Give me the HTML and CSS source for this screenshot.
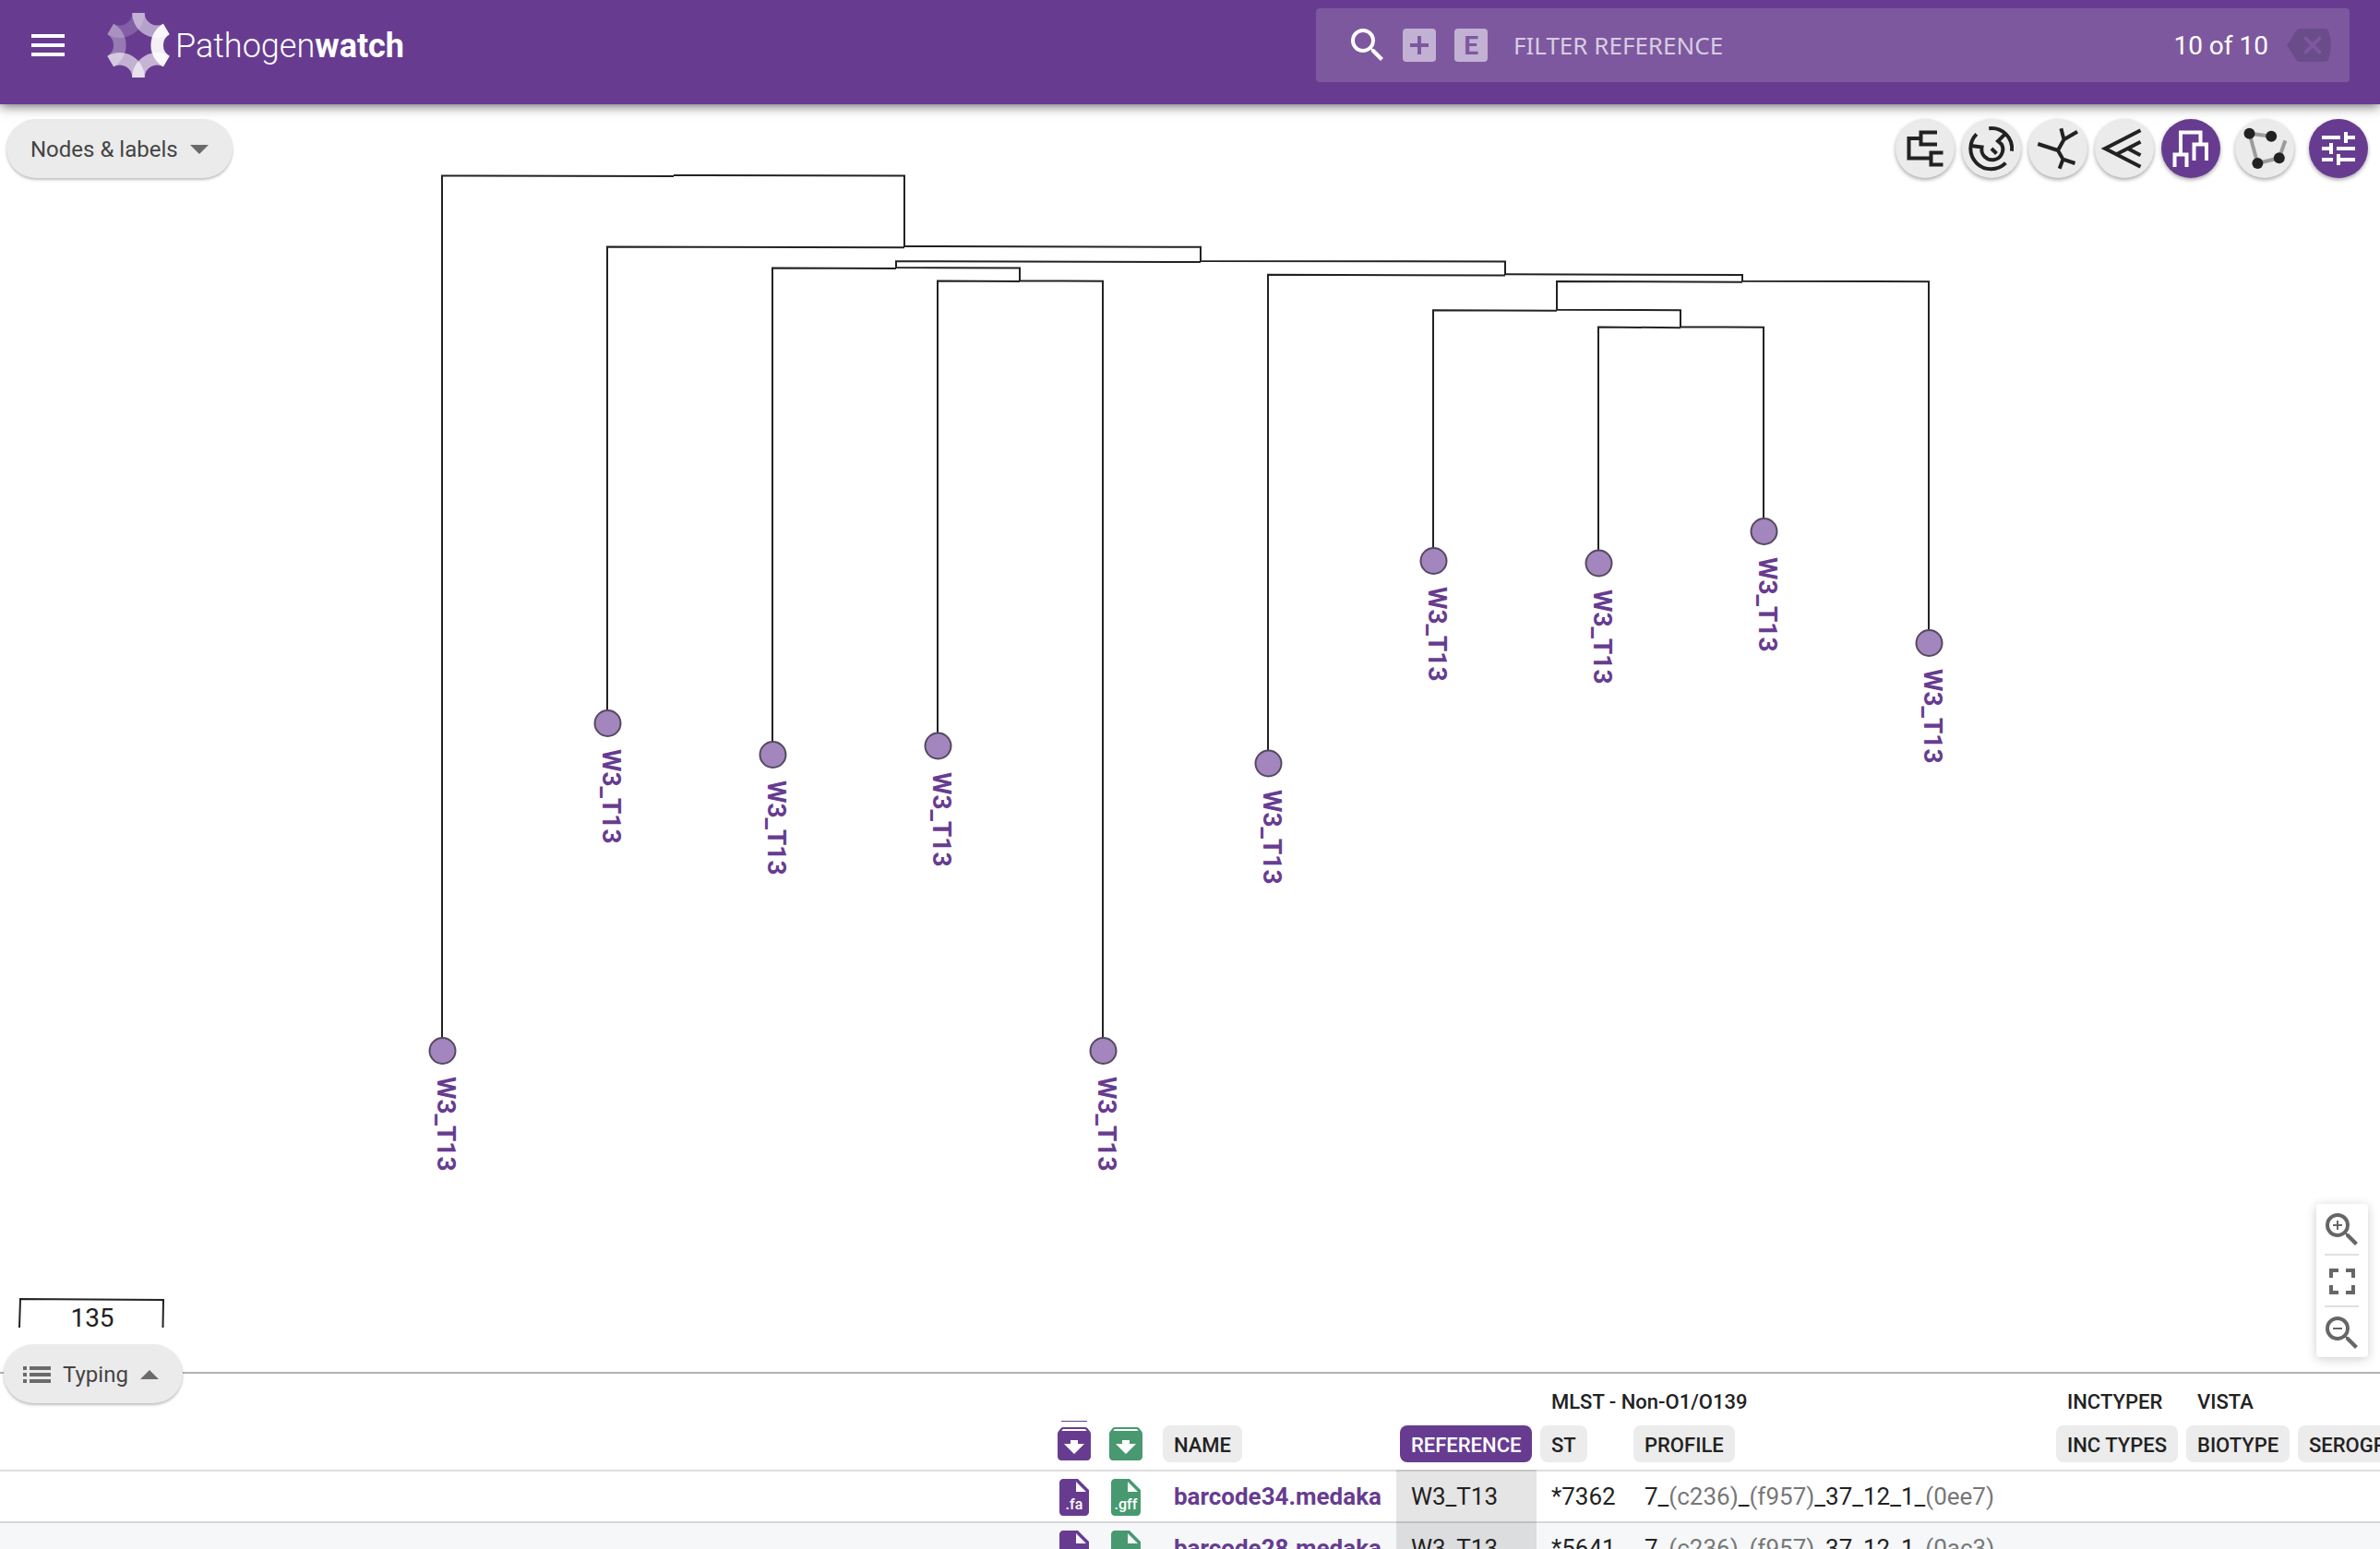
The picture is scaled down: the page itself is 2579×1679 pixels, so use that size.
FILE: index.html
```html
<!DOCTYPE html>
<html lang="en">
<head>
<meta charset="utf-8">
<title>Pathogenwatch</title>
<link rel="stylesheet" href="styles.css">
</head>
<body>
<header class="topbar">
  <button class="menu-button" type="button" aria-label="Menu">
    <svg class="icon" viewBox="0 0 24 24"><path d="M3 18h18v-2H3v2zm0-5h18v-2H3v2zm0-7v2h18V6H3z"/></svg>
  </button>
  <a class="brand" href="#">
    <svg class="brand-mark" viewBox="-36 -36 72 72" aria-hidden="true">
      <defs><path id="arc" d="M30.3 -17.5A20.2 20.2 0 0 0 30.3 17.5" fill="none" stroke="#fff" stroke-width="13.5"/></defs>
      <use href="#arc" opacity=".92"/>
      <use href="#arc" transform="rotate(60)" opacity=".62"/>
      <use href="#arc" transform="rotate(120)" opacity=".6"/>
      <use href="#arc" transform="rotate(180)" opacity=".32"/>
      <use href="#arc" transform="rotate(240)" opacity=".18"/>
      <use href="#arc" transform="rotate(300)" opacity=".52"/>
    </svg>
    <span class="brand-name">Pathogen<b>watch</b></span>
  </a>
  <form class="filter" role="search">
    <button class="filter-button" type="button" aria-label="Search">
      <svg class="icon" viewBox="0 0 24 24"><path d="M15.5 14h-.79l-.28-.27A6.471 6.471 0 0 0 16 9.5 6.5 6.5 0 1 0 9.5 16c1.61 0 3.09-.59 4.23-1.57l.27.28v.79l5 4.99L20.49 19l-4.99-5zm-6 0C7.01 14 5 11.99 5 9.5S7.01 5 9.5 5 14 7.01 14 9.5 11.99 14 9.5 14z"/></svg>
    </button>
    <button class="filter-key" type="button" aria-label="Add">
      <svg class="key-plus" viewBox="0 0 20 20"><path d="M8 0h4v8h8v4h-8v8H8v-8H0V8h8z"/></svg>
    </button>
    <button class="filter-key" type="button">E</button>
    <input class="filter-input" type="text" placeholder="FILTER REFERENCE" aria-label="Filter reference">
    <span class="filter-count">10 of 10</span>
    <button class="filter-clear" type="button" aria-label="Clear filter">
      <svg class="clear-icon" viewBox="0 0 48 36"><path fill-rule="evenodd" d="M14 0H42Q44 0 45 2Q48 10 48 18T45 34Q44 36 42 36H14Q12 36 10.500 34L0 18L10.500 2Q12 0 14 0ZM20.800 8L18 10.800L25.200 18L18 25.200L20.800 28L28 20.800L35.200 28L38 25.200L30.800 18L38 10.800L35.200 8L28 15.200Z"/></svg>
    </button>
  </form>
</header>

<main class="tree-panel">
  <svg class="tree" viewBox="0 0 2579 1374" role="img" aria-label="Phylogenetic tree">
    <g class="branches">
      <path d="M479 1026V77.500L730 78M730 77L980 77.500V155M658 671V154.500L980 155.200M980 154L1301 154.700V170.500M971 178V170.200L1301 171M1301 170L1631 170.500V185M837 704V177.500L971 178M971 177L1105 177.500V192M1016 695V191.500L1105 192M1105 191.200L1195 191.700V1026"/>
      <path d="M1374 714V184.800L1631 185.500M1631 184.200L1888 185V192.500M1687 223V192L1888 192.700M1888 191.700L2090 192.200V584M1553 495V223.200L1687 223.700M1687 222.700L1821 223.200V242M1732 497V241.500L1821 242.200M1821 241.200L1911 241.700V463"/>
    </g>
    <g class="nodes">
      <circle cx="479.500" cy="1026" r="14"/><circle cx="658.500" cy="671" r="14"/><circle cx="837.500" cy="705" r="14"/><circle cx="1016.500" cy="695.500" r="14"/><circle cx="1195.500" cy="1026" r="14"/><circle cx="1374.500" cy="714.500" r="14"/><circle cx="1553.500" cy="495" r="14"/><circle cx="1732.500" cy="497.500" r="14"/><circle cx="1911.500" cy="463" r="14"/><circle cx="2090.500" cy="584" r="14"/>
    </g>
    <g class="labels">
      <text transform="translate(474 1054) rotate(90)">W3_T13</text>
      <text transform="translate(653 699) rotate(90)">W3_T13</text>
      <text transform="translate(832 733) rotate(90)">W3_T13</text>
      <text transform="translate(1011 724) rotate(90)">W3_T13</text>
      <text transform="translate(1190 1054) rotate(90)">W3_T13</text>
      <text transform="translate(1369 743) rotate(90)">W3_T13</text>
      <text transform="translate(1548 523) rotate(90)">W3_T13</text>
      <text transform="translate(1727 526) rotate(90)">W3_T13</text>
      <text transform="translate(1906 491) rotate(90)">W3_T13</text>
      <text transform="translate(2085 612) rotate(90)">W3_T13</text>
    </g>
    <g class="scale-bar">
      <path d="M21 1326L22 1295L177 1296L176.500 1326"/>
      <text x="100" y="1325">135</text>
    </g>
  </svg>

  <div class="tree-controls">
    <button class="pill" type="button">Nodes &amp; labels
      <svg class="caret" viewBox="0 0 20 10"><path d="M0 0h20L10 10z"/></svg>
    </button>
    <div class="tree-tools">
      <button class="round" type="button" aria-label="Rectangular"><svg viewBox="0 0 64 64"><path d="M45 14.500H27.500V27.500H45M27.500 21H14.500V42.500H38M51.500 36.500H38.500V49.500H51.500"/></svg></button>
      <button class="round" type="button" aria-label="Circular"><svg viewBox="0 0 64 64"><path d="M15.800 16.300A22 22 0 1 0 47.400 47.700M29.200 10.200A22 22 0 0 1 54 34.700M10 29L21.500 30.500A11.500 11.500 0 1 0 43 27.500L39 24L47.400 15.700M32 32L37.500 37.500"/></svg></button>
      <button class="round" type="button" aria-label="Radial"><svg viewBox="0 0 64 64"><path d="M10.300 27L32 34L38.500 22.300L53 13.700M38.500 22.300L35.400 10.300M32 34L37.500 43.700L50.500 48M37.500 43.700L33.700 53.700"/></svg></button>
      <button class="round" type="button" aria-label="Diagonal"><svg viewBox="0 0 64 64"><path d="M49.500 12.300L11 32L49.500 51.700M23.400 38.300L49.500 24.700M35.800 32L49.500 39.300"/></svg></button>
      <button class="round active" type="button" aria-label="Hierarchical"><svg viewBox="0 0 64 64"><path d="M21 38V14.500H42.500V27M14.500 52V38.500H27.500V52M35.500 45V27.500H49V45"/></svg></button>
      <button class="round spaced" type="button" aria-label="Lasso"><svg viewBox="0 0 64 64"><path class="faint" d="M39.200 18.700L15.500 15.700L24.400 48L47.800 42.300L54.300 23.300"/><g class="dots"><circle cx="15.500" cy="15.700" r="6"/><circle cx="39.200" cy="18.700" r="6"/><circle cx="24.400" cy="48" r="6"/><circle cx="47.800" cy="42.300" r="6"/></g></svg></button>
      <button class="round active spaced" type="button" aria-label="Settings"><svg class="solid" viewBox="-4 -4 32 32"><path d="M3 17v2h6v-2H3zM3 5v2h10V5H3zm10 16v-2h8v-2h-8v-2h-2v6h2zM7 9v2H3v2h4v2h2V9H7zm14 4v-2H11v2h10zm-6-4h2V7h4V5h-4V3h-2v6z"/></svg></button>
    </div>
  </div>

  <div class="zoom-controls">
    <button type="button" aria-label="Zoom in"><svg class="icon" viewBox="0 0 24 24"><path d="M15.500 14h-.79l-.28-.27A6.471 6.471 0 0 0 16 9.500 6.500 6.500 0 1 0 9.500 16c1.610 0 3.090-.59 4.230-1.570l.27.280v.79l5 4.990L20.490 19l-4.990-5zm-6 0C7.010 14 5 11.990 5 9.500S7.010 5 9.500 5 14 7.010 14 9.500 11.990 14 9.500 14zM12 10h-2v2H9v-2H7V9h2V7h1v2h2v1z"/></svg></button>
    <button type="button" aria-label="Fit to view"><svg class="icon" viewBox="0 0 24 24"><path d="M7 14H5v5h5v-2H7v-3zm-2-4h2V7h3V5H5v5zm12 7h-3v2h5v-5h-2v3zM14 5v2h3v3h2V5h-5z"/></svg></button>
    <button type="button" aria-label="Zoom out"><svg class="icon" viewBox="0 0 24 24"><path d="M15.500 14h-.79l-.28-.27A6.471 6.471 0 0 0 16 9.500 6.500 6.500 0 1 0 9.500 16c1.610 0 3.090-.59 4.230-1.570l.27.280v.79l5 4.990L20.490 19l-4.990-5zm-6 0C7.010 14 5 11.990 5 9.500S7.010 5 9.500 5 14 7.010 14 9.500 11.990 14 9.500 14zM7 9h5v1H7z"/></svg></button>
  </div>
</main>

<section class="data-panel">
  <button class="pill typing" type="button">
    <svg class="list-icon" viewBox="0 0 30 18"><path d="M0 0h4v4H0zM7 0h23v4H7zM0 7h4v4H0zM7 7h23v4H7zM0 14h4v4H0zM7 14h23v4H7z"/></svg>
    Typing
    <svg class="caret" viewBox="0 0 20 10"><path d="M0 10h20L10 0z"/></svg>
  </button>
  <table class="data">
    <colgroup>
      <col><col class="c-fa"><col class="c-gff"><col class="c-name"><col class="c-ref"><col class="c-st"><col class="c-profile"><col class="c-inc"><col class="c-bio"><col class="c-sero">
    </colgroup>
    <thead>
      <tr class="groups">
        <th colspan="5"></th><th colspan="2">MLST - Non-O1/O139</th><th>INCTYPER</th><th colspan="2">VISTA</th>
      </tr>
      <tr class="columns">
        <th></th>
        <th class="file"><button class="download fa" type="button" aria-label="Download FASTA"><svg class="icon" viewBox="0 0 24 24"><path d="M20.540 5.230l-1.390-1.680C18.880 3.210 18.470 3 18 3H6c-.47 0-.88.210-1.160.550L3.460 5.230C3.170 5.570 3 6.020 3 6.500V19c0 1.100.9 2 2 2h14c1.100 0 2-.9 2-2V6.500c0-.48-.17-.93-.46-1.270zM12 17.500L6.500 12H10v-2h4v2h3.500L12 17.500zM5.120 5l.81-1h12l.94 1H5.120z"/></svg></button></th>
        <th class="file"><button class="download gff" type="button" aria-label="Download GFF"><svg class="icon" viewBox="0 0 24 24"><path d="M20.540 5.230l-1.390-1.680C18.880 3.210 18.470 3 18 3H6c-.47 0-.88.210-1.160.550L3.460 5.230C3.170 5.570 3 6.020 3 6.500V19c0 1.100.9 2 2 2h14c1.100 0 2-.9 2-2V6.500c0-.48-.17-.93-.46-1.270zM12 17.500L6.500 12H10v-2h4v2h3.500L12 17.500zM5.120 5l.81-1h12l.94 1H5.120z"/></svg></button></th>
        <th><button class="chip" type="button">NAME</button></th>
        <th><button class="chip active" type="button">REFERENCE</button></th>
        <th><button class="chip" type="button">ST</button></th>
        <th><button class="chip" type="button">PROFILE</button></th>
        <th><button class="chip" type="button">INC TYPES</button></th>
        <th><button class="chip" type="button">BIOTYPE</button></th>
        <th><button class="chip" type="button">SEROGROUP</button></th>
      </tr>
    </thead>
    <tbody>
      <tr>
        <td></td>
        <td class="file"><a class="download fa" href="#"><svg class="icon" viewBox="0 0 24 24"><path d="M6 2c-1.100 0-1.990.9-1.990 2L4 20c0 1.100.890 2 1.990 2H18c1.100 0 2-.9 2-2V8l-6-6H6zm7 7V3.500L18.500 9H13z"/></svg><span>.fa</span></a></td>
        <td class="file"><a class="download gff" href="#"><svg class="icon" viewBox="0 0 24 24"><path d="M6 2c-1.100 0-1.990.9-1.990 2L4 20c0 1.100.890 2 1.990 2H18c1.100 0 2-.9 2-2V8l-6-6H6zm7 7V3.500L18.500 9H13z"/></svg><span>.gff</span></a></td>
        <td><a class="name" href="#">barcode34.medaka</a></td>
        <td class="selected">W3_T13</td>
        <td>*7362</td>
        <td>7_<i>(c236)</i>_<i>(f957)</i>_37_12_1_<i>(0ee7)</i></td>
        <td></td><td></td><td></td>
      </tr>
      <tr>
        <td></td>
        <td class="file"><a class="download fa" href="#"><svg class="icon" viewBox="0 0 24 24"><path d="M6 2c-1.100 0-1.990.9-1.990 2L4 20c0 1.100.890 2 1.990 2H18c1.100 0 2-.9 2-2V8l-6-6H6zm7 7V3.500L18.500 9H13z"/></svg><span>.fa</span></a></td>
        <td class="file"><a class="download gff" href="#"><svg class="icon" viewBox="0 0 24 24"><path d="M6 2c-1.100 0-1.990.9-1.990 2L4 20c0 1.100.890 2 1.990 2H18c1.100 0 2-.9 2-2V8l-6-6H6zm7 7V3.500L18.500 9H13z"/></svg><span>.gff</span></a></td>
        <td><a class="name" href="#">barcode28.medaka</a></td>
        <td class="selected">W3_T13</td>
        <td>*5641</td>
        <td>7_<i>(c236)</i>_<i>(f957)</i>_37_12_1_<i>(0ac3)</i></td>
        <td></td><td></td><td></td>
      </tr>
    </tbody>
  </table>
</section>
</body>
</html>
```
FILE: styles.css
```css
:root {
  --purple: #673c90;
  --green: #48996f;
  --ink: #222;
  --grey: #ebebeb;
}

* {
  box-sizing: border-box;
}

body {
  margin: 0;
  height: 100vh;
  overflow: hidden;
  display: flex;
  flex-direction: column;
  background: #fff;
  color: var(--ink);
  font: 26px/32px Roboto, sans-serif;
}

button {
  margin: 0;
  padding: 0;
  border: 0;
  background: none;
  color: inherit;
  font: inherit;
  cursor: pointer;
}

svg {
  display: block;
}

.icon {
  width: 48px;
  height: 48px;
  fill: currentColor;
}

/* Top bar */
.topbar {
  flex: none;
  position: relative;
  z-index: 2;
  height: 113px;
  padding: 9px 33px 24px 28px;
  display: flex;
  align-items: center;
  background: var(--purple);
  color: #fff;
  box-shadow: 0 2px 12px rgba(0, 0, 0, .6);
}

.brand {
  margin-left: 38px;
  display: flex;
  align-items: center;
  gap: 4px;
  color: #fff;
  text-decoration: none;
}

.brand-mark {
  width: 72px;
  height: 72px;
}

.brand-name {
  padding-top: 2px;
  font-size: 36px;
  line-height: 48px;
  font-weight: 300;
}

.brand-name b {
  font-weight: 700;
}

.filter {
  margin-left: auto;
  width: 45%;
  max-width: 1120px;
  height: 80px;
  padding: 0 20px 0 32px;
  display: flex;
  align-items: center;
  border-radius: 4px;
  background: #7d589f;
}

.filter-key {
  width: 36px;
  height: 36px;
  margin-left: 20px;
  padding-top: 2px;
  display: grid;
  place-items: center;
  border-radius: 4px;
  background: #c3b1d4;
  color: #7d589f;
  font-size: 28px;
  font-weight: 700;
}

.filter-button + .filter-key {
  margin-left: 14px;
  padding-top: 0;
}

.key-plus {
  width: 20px;
  height: 20px;
  fill: currentColor;
}

.filter-input {
  flex: 1;
  min-width: 0;
  margin-left: 28px;
  padding: 0;
  border: 0;
  outline: 0;
  background: none;
  color: #fff;
  font: 26px/32px "Noto Sans", sans-serif;
}

.filter-input::placeholder {
  color: #d8cde2;
  opacity: 1;
}

.filter-count {
  padding-top: 2px;
  font-size: 28px;
}

.filter-clear {
  margin-left: 20px;
  color: #6a4c8b;
}

.clear-icon {
  width: 48px;
  height: 36px;
  fill: currentColor;
}

/* Tree */
.tree-panel {
  flex: 1;
  min-height: 0;
  position: relative;
}

.tree {
  width: 100%;
  height: 100%;
}

.branches path,
.scale-bar path {
  fill: none;
  stroke: var(--ink);
  stroke-width: 2;
}

.nodes circle {
  fill: #a386bd;
  stroke: #55495f;
  stroke-width: 2;
}

.labels text {
  fill: var(--purple);
  font-size: 28px;
  font-weight: 700;
}

.scale-bar text {
  fill: var(--ink);
  font-size: 28px;
  text-anchor: middle;
}

.tree-controls {
  position: absolute;
  inset: 16px 13px auto 7px;
  display: flex;
  justify-content: space-between;
}

.pill {
  height: 64px;
  padding: 2px 26px 0;
  display: flex;
  align-items: center;
  gap: 13px;
  border-radius: 32px;
  background: var(--grey);
  color: #444;
  font-size: 24px;
  box-shadow: 0 2px 3px rgba(0, 0, 0, .25);
}

.caret {
  width: 20px;
  height: 10px;
  fill: #6a6a6a;
}

.tree-tools {
  display: flex;
  gap: 8px;
}

.round {
  width: 64px;
  height: 64px;
  border-radius: 50%;
  background: var(--grey);
  color: var(--ink);
  box-shadow: 0 2px 4px rgba(0, 0, 0, .35);
}

.round.active {
  background: var(--purple);
  color: #fff;
}

.round.spaced {
  margin-left: 8px;
}

.round svg {
  fill: none;
  stroke: currentColor;
  stroke-width: 4;
}

.round svg.solid {
  fill: currentColor;
  stroke: none;
}

.round .faint {
  stroke: #9c9c9c;
}

.round .dots {
  fill: currentColor;
  stroke: none;
}

.zoom-controls {
  position: absolute;
  right: 13px;
  bottom: 16px;
  width: 56px;
  display: flex;
  flex-direction: column;
  border-radius: 4px;
  background: #fff;
  color: #666;
  box-shadow: 0 2px 12px rgba(0, 0, 0, .2);
}

.zoom-controls button {
  padding: 4px 4px 2px;
}

.zoom-controls button + button::before {
  content: "";
  display: block;
  height: 2px;
  margin: -4px 6px 4px 5px;
  background: #e0e0e0;
}

/* Data table */
.data-panel {
  flex: none;
  position: relative;
  height: 192px;
  border-top: 2px solid #b3b3b3;
}

.typing {
  position: absolute;
  top: -32px;
  left: 4px;
  padding-left: 21px;
}

.list-icon {
  width: 30px;
  height: 18px;
  fill: #6a6a6a;
}

.data {
  width: 100%;
  table-layout: fixed;
  border-collapse: separate;
  border-spacing: 0;
}

.c-fa { width: 56px; }
.c-gff { width: 64px; }
.c-name { width: 257px; }
.c-ref { width: 152px; }
.c-st { width: 101px; }
.c-profile { width: 458px; }
.c-inc { width: 141px; }
.c-bio { width: 121px; }
.c-sero { width: 93px; }

.data th,
.data td {
  padding: 0 0 0 16px;
  text-align: left;
  white-space: nowrap;
}

.groups th {
  height: 56px;
  padding-top: 6px;
  font-size: 22px;
  font-weight: 500;
}

.data .columns th {
  height: 48px;
  padding: 0 0 8px 4px;
  vertical-align: top;
}

.chip {
  height: 40px;
  padding: 4px 12px 0;
  border-radius: 8px;
  background: #ececec;
  font-size: 22px;
  font-weight: 500;
  display: block;
}

.chip.active {
  background: var(--purple);
  color: #fff;
}

.download {
  position: relative;
  display: block;
  width: 48px;
  height: 48px;
}

.columns .download {
  margin: -4px 0;
}

.columns .fa::before {
  content: "";
  position: absolute;
  top: -1px;
  left: 10px;
  width: 28px;
  height: 1px;
  background: var(--purple);
}

.fa { color: var(--purple); }
.gff { color: var(--green); }

.download span {
  position: absolute;
  inset: auto 0 6px;
  color: #fff;
  font-size: 16px;
  line-height: 20px;
  font-weight: 500;
  text-align: center;
}

.data td {
  height: 56px;
  border-top: 2px solid rgba(0, 0, 0, .13);
}

.data td.file {
  padding: 2px 0 0 4px;
}

tbody tr:nth-child(even) {
  background: #f5f7f9;
}

.selected {
  background: rgba(0, 0, 0, .1);
}

.name {
  color: var(--purple);
  font-weight: 700;
  text-decoration: none;
}

.data i {
  color: #777;
  font-style: normal;
}
```
